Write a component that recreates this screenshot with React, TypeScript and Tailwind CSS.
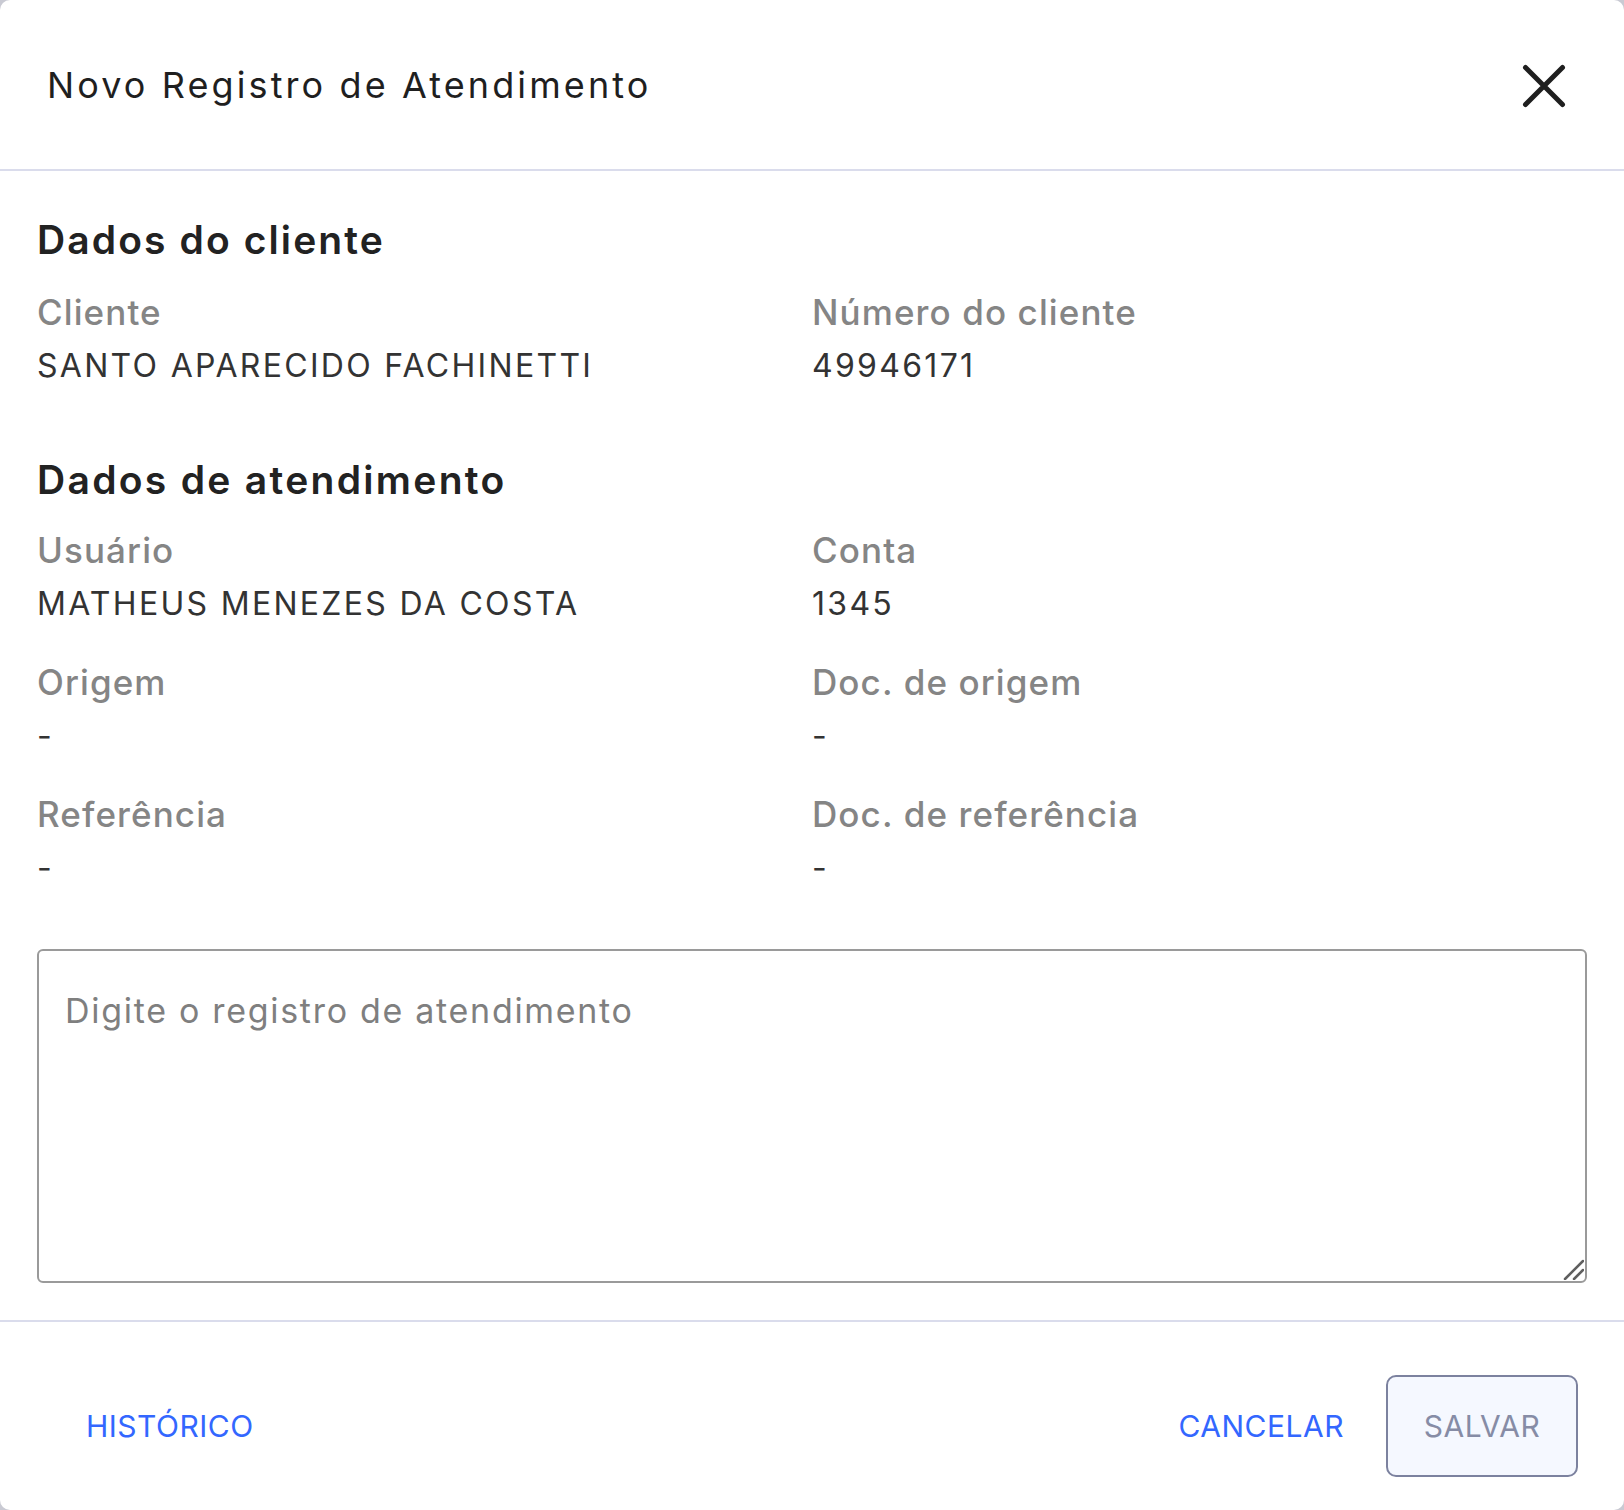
import React from "react";

const font = { fontFamily: "Inter, 'Open Sans', sans-serif" };

function Field({ label, value }: { label: string; value: string }) {
  return (
    <div className="flex flex-col">
      <div className="text-[35px] leading-[40px] font-medium text-[#858585] tracking-[1.1px]">{label}</div>
      <div className="mt-[14px] text-[32px] leading-[40px] text-[#333333] tracking-[2.3px]">{value}</div>
    </div>
  );
}

export default function App() {
  return (
    <div className="w-[1624px] h-[1510px] bg-[#c9cad3]" style={font}>
      <div className="w-full h-full bg-white rounded-[10px] flex flex-col overflow-hidden">
        <div className="h-[171px] shrink-0 flex items-center justify-between pl-[47px] pr-[58px] border-b-2 border-[#dadcec]">
          <div className="text-[36px] leading-[40px] text-[#1f1f1f] tracking-[3.1px]">Novo Registro de Atendimento</div>
          <svg width="44" height="44" viewBox="0 0 44 44" className="mt-[2px]">
            <path d="M3.5 3.5 L40.5 40.5 M40.5 3.5 L3.5 40.5" stroke="#1f1f1f" strokeWidth="5" strokeLinecap="round" />
          </svg>
        </div>
        <div className="flex-1 flex flex-col px-[37px] pt-[47px]">
          <div className="text-[39px] leading-[44px] font-semibold text-[#222222] tracking-[2.1px]">Dados do cliente</div>
          <div className="grid grid-cols-2 mt-[30px]">
            <Field label="Cliente" value="SANTO APARECIDO FACHINETTI" />
            <Field label="Número do cliente" value="49946171" />
          </div>
          <div className="text-[39px] leading-[44px] font-semibold text-[#222222] tracking-[2.3px] mt-[72px]">Dados de atendimento</div>
          <div className="grid grid-cols-2 mt-[28px] gap-y-[38px]">
            <Field label="Usuário" value="MATHEUS MENEZES DA COSTA" />
            <Field label="Conta" value="1345" />
            <Field label="Origem" value="-" />
            <Field label="Doc. de origem" value="-" />
            <Field label="Referência" value="-" />
            <Field label="Doc. de referência" value="-" />
          </div>
          <div className="relative mt-[61px] w-full h-[334px]">
            <textarea
              className="w-full h-full border-2 border-[#9a9a9a] rounded-[6px] px-[26px] py-[40px] text-[34px] leading-[40px] tracking-[1.7px] text-[#333] placeholder:text-[#7f7f7f] outline-none resize-none"
              placeholder="Digite o registro de atendimento"
              style={font}
            />
            <svg width="22" height="22" viewBox="0 0 22 22" className="absolute right-[3px] bottom-[3px] pointer-events-none">
              <path d="M3 21 L21 3 M12 21 L21 12" stroke="#5f5f5f" strokeWidth="2.5" strokeLinecap="round" />
            </svg>
          </div>
        </div>
        <div className="h-[190px] shrink-0 border-t-2 border-[#dadcec] flex items-center justify-between pt-[20px] pl-[86px] pr-[46px]">
          <button className="text-[30px] leading-[40px] text-[#3367ff] tracking-[0.5px]" style={font}>HISTÓRICO</button>
          <div className="flex items-center gap-[42px]">
            <button className="text-[30px] leading-[40px] text-[#3367ff] tracking-[0.5px]" style={font}>CANCELAR</button>
            <button
              className="w-[192px] h-[102px] border-2 border-[#7c829f] rounded-[10px] bg-[#f5f8ff] text-[30px] leading-[40px] text-[#868ca6] tracking-[0.5px]"
              style={font}
            >
              SALVAR
            </button>
          </div>
        </div>
      </div>
    </div>
  );
}
